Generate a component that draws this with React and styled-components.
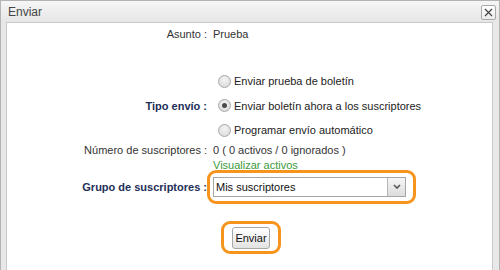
import React from 'react'
import styled, { createGlobalStyle } from 'styled-components'

const Global = createGlobalStyle`
  html, body { margin: 0; padding: 0; background: #fff; }
  body { font-family: "Liberation Sans", Arial, sans-serif; font-size: 11px; line-height: 14px; color: #333; }
`

const Window = styled.div`
  width: 500px;
  height: 270px;
  box-sizing: border-box;
  display: flex;
  flex-direction: column;
  background: #e8e8e8;
  border: 1px solid #b4b4b4;
  border-bottom: none;
  overflow: hidden;
`

const TitleBar = styled.div`
  height: 21px;
  flex: none;
  display: flex;
  align-items: center;
  justify-content: space-between;
  padding: 0 3px 0 7px;
  background: linear-gradient(#f6f6f6, #e6e6e6);
  color: #444;
  font-size: 12px;
`

const CloseBtn = styled.div`
  width: 13px;
  height: 13px;
  border: 1px solid #a9a9a9;
  border-radius: 2px;
  background: linear-gradient(#ffffff, #ececec);
  display: flex;
  align-items: center;
  justify-content: center;
  margin-top: 2px;
`

const Body = styled.div`
  flex: 1;
  margin: 0 6px 0 5px;
  background: #fff;
  border: 1px solid #c9c9c9;
  border-bottom: none;
`

const Form = styled.div`
  display: grid;
  grid-template-columns: 200px 1fr;
  column-gap: 6px;
  align-items: center;
`

const Label = styled.div`
  text-align: right;
  color: ${p => (p.$strong ? '#1e2f57' : '#333')};
  font-weight: ${p => (p.$strong ? 'bold' : 'normal')};
  white-space: nowrap;
`

const Value = styled.div`
  white-space: nowrap;
  line-height: ${p => p.$lh || 14}px;
`

const Row = styled.div`
  display: contents;
`

const Spacer = styled.div`
  grid-column: 1 / -1;
  height: ${p => p.$h}px;
`

const RadioList = styled.div`
  display: flex;
  flex-direction: column;
`

const RadioLine = styled.label`
  display: flex;
  align-items: center;
  height: 24.5px;
  color: #222;
`

const Radio = styled.input.attrs({ type: 'radio' })`
  appearance: none;
  width: 13px;
  height: 13px;
  margin: 0 3px 0 5px;
  border-radius: 50%;
  border: 1px solid #a8a8a8;
  box-sizing: border-box;
  background: radial-gradient(circle at 50% 35%, #f4f4f4, #d6d6d6);
  position: relative;
  &:checked::after {
    content: '';
    position: absolute;
    left: 3px;
    top: 3px;
    width: 5px;
    height: 5px;
    border-radius: 50%;
    background: #4a4a4a;
  }
`

const Link = styled.a`
  color: #3b9a3b;
  text-decoration: none;
  display: block;
  line-height: 14px;
  margin-bottom: -2px;
`

const Highlight = styled.div`
  position: relative;
  display: inline-flex;
  border: 3px solid #f7941d;
  border-radius: 9px;
  padding: ${p => p.$pad};
  margin-left: ${p => p.$ml || 0}px;
  vertical-align: top;
`

const Select = styled.div`
  width: 193px;
  height: 20px;
  box-sizing: border-box;
  border: 1px solid #a6a6a6;
  display: flex;
  align-items: stretch;
  background: #fff;
  color: #111;
`

const SelectText = styled.div`
  flex: 1;
  padding-left: 2px;
  display: flex;
  align-items: center;
`

const SelectArrow = styled.div`
  width: 17px;
  border-left: 1px solid #b5b5b5;
  background: linear-gradient(#f6f6f6, #dcdcdc);
  display: flex;
  align-items: center;
  justify-content: center;
`

const ButtonRow = styled.div`
  grid-column: 1 / -1;
  display: flex;
  padding-left: 214px;
`

const Button = styled.button`
  font-family: inherit;
  font-size: 11px;
  color: #111;
  height: 22px;
  width: 38px;
  padding: 0;
  border: 1px solid #a7a7a7;
  border-radius: 3px;
  background: linear-gradient(#ffffff, #e2e2e2);
`

export default function App() {
  return (
    <>
      <Global />
      <Window>
        <TitleBar>
          <span>Enviar</span>
          <CloseBtn>
            <svg width="9" height="9" viewBox="0 0 9 9">
              <path d="M1 1L8 8M8 1L1 8" stroke="#444" strokeWidth="1.2" />
            </svg>
          </CloseBtn>
        </TitleBar>
        <Body>
          <Form>
            <Spacer $h={4} />
            <Row>
              <Label>Asunto :</Label>
              <Value>Prueba</Value>
            </Row>
            <Spacer $h={28} />
            <Row>
              <Label $strong>Tipo envío :</Label>
              <RadioList>
                <RadioLine><Radio name="t" />Enviar prueba de boletín</RadioLine>
                <RadioLine><Radio name="t" defaultChecked />Enviar boletín ahora a los suscriptores</RadioLine>
                <RadioLine><Radio name="t" />Programar envío automático</RadioLine>
              </RadioList>
            </Row>
            <Row>
              <Label>Número de suscriptores :</Label>
              <Value $lh={15}>0 ( 0 activos / 0 ignorados )</Value>
            </Row>
            <Row>
              <div />
              <Link href="#">Visualizar activos</Link>
            </Row>
            <Row>
              <Label $strong>Grupo de suscriptores :</Label>
              <Value>
                <Highlight $pad="4px 7px 4px 3px" $ml={-6}>
                  <Select>
                    <SelectText>Mis suscriptores</SelectText>
                    <SelectArrow>
                      <svg width="8" height="5" viewBox="0 0 8 5">
                        <path d="M1 1L4 4L7 1" stroke="#555" strokeWidth="1.6" fill="none" />
                      </svg>
                    </SelectArrow>
                  </Select>
                </Highlight>
              </Value>
            </Row>
            <Spacer $h={17} />
            <ButtonRow>
              <Highlight $pad="3px 8px 2px 8px">
                <Button>Enviar</Button>
              </Highlight>
            </ButtonRow>
          </Form>
        </Body>
      </Window>
    </>
  )
}
